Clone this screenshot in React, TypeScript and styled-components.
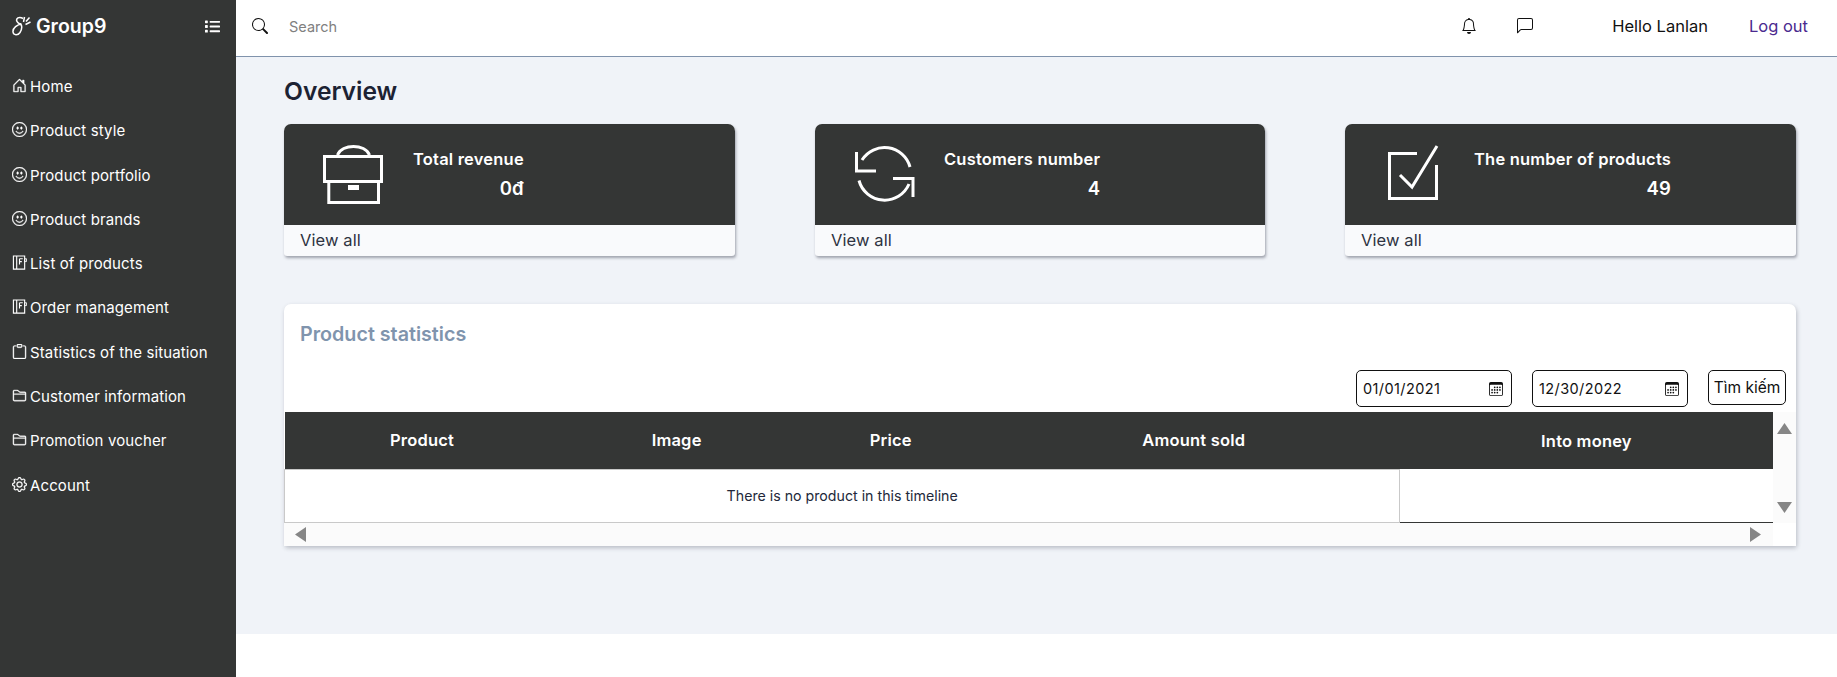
import React, { ReactNode } from 'react';
import styled, { createGlobalStyle } from 'styled-components';
import {
  BsBell,
  BsCalendar3,
  BsChatLeft,
  BsClipboard,
  BsEmojiSmile,
  BsFolder2,
  BsGear,
  BsHouseDoor,
  BsSearch,
} from 'react-icons/bs';
import { FaList } from 'react-icons/fa';

const dark = '#343635';
const font = '"Inter", "Noto Sans", sans-serif';

const GlobalStyle = createGlobalStyle`
  html, body {
    margin: 0;
    padding: 0;
    background: #fff;
    font-family: ${font};
  }
  * {
    box-sizing: border-box;
  }
`;

const Page = styled.div`
  display: flex;
  height: 677px;
  overflow: hidden;
`;

const Sidebar = styled.aside`
  width: 236px;
  flex: none;
  background: ${dark};
  color: #fff;
`;

const Brand = styled.div`
  display: flex;
  align-items: center;
  height: 56px;
  padding: 0 16px 4px 12px;
`;

const BrandName = styled.span`
  flex: 1;
  margin-left: 5px;
  font-size: 19.5px;
  font-weight: 600;
`;

const Nav = styled.nav`
  display: flex;
  flex-direction: column;
  gap: 14.3px;
  padding-top: 15.5px;
`;

const NavItem = styled.a`
  display: flex;
  align-items: center;
  gap: 3px;
  height: 30px;
  padding-left: 12px;
  font-size: 15px;
  letter-spacing: 0.12px;
  font-weight: 400;
  color: #fff;
  svg {
    flex: none;
    width: 15px;
    height: 15px;
    margin-top: -2px;
    stroke: currentColor;
    stroke-width: 0.35;
  }
`;

const Content = styled.div`
  flex: 1;
  min-width: 0;
  display: flex;
  flex-direction: column;
`;

const TopBar = styled.header`
  display: flex;
  align-items: center;
  height: 57px;
  flex: none;
  padding: 0 29px 4px 16px;
  background: #fff;
  border-bottom: 1px solid #8093ac;
  font-size: 16.5px;
  color: #111;
`;

const SearchField = styled.div`
  flex: 1;
  display: flex;
  align-items: center;
  gap: 21px;
  font-size: 14.5px;
  color: #808080;
  svg {
    width: 16px;
    height: 16px;
    color: #111;
  }
`;

const TopIcon = styled.span`
  display: flex;
  margin-left: 40px;
  svg {
    width: 16px;
    height: 16px;
  }
`;

const Greeting = styled.span`
  margin-left: 79px;
`;

const Logout = styled.a`
  margin-left: 41px;
  color: #4b2a8f;
`;

const Main = styled.main`
  height: 577px;
  flex: none;
  padding: 0 41px 0 48px;
  background: #f0f3f8;
`;

const Heading = styled.h1`
  margin: 0;
  height: 67px;
  padding-top: 17px;
  font-size: 24.6px;
  line-height: 34px;
  font-weight: 600;
  color: #1c2233;
`;

const Cards = styled.section`
  display: grid;
  grid-template-columns: 451px 450px 451px;
  gap: 80px;
`;

const Card = styled.article`
  height: 132px;
  border-radius: 7px 7px 3px 3px;
  overflow: hidden;
  background: #f9fafc;
  box-shadow: 1px 2px 3px rgba(60, 64, 80, 0.45);
`;

const CardBody = styled.div`
  display: flex;
  height: 101px;
  padding: 20px 0 0 38px;
  background: ${dark};
  color: #fff;
`;

const CardIcon = styled.svg`
  flex: none;
  width: 64px;
  height: 64px;
  margin-right: 27px;
  fill: none;
  stroke: #fff;
  stroke-width: 3;
`;

const CardText = styled.div`
  display: flex;
  flex-direction: column;
  align-items: flex-end;
  align-self: flex-start;
  font-size: 16.5px;
  letter-spacing: 0.2px;
  font-weight: 600;
`;

const CardTitle = styled.div`
  line-height: 28px;
  padding-top: 1px;
  height: 30px;
`;

const CardValue = styled.div`
  line-height: 28px;
  font-size: 18.5px;
`;

const CardLink = styled.a`
  display: block;
  padding-left: 16px;
  font-size: 16.5px;
  letter-spacing: 0.1px;
  line-height: 31px;
  color: #2e3342;
`;

const Panel = styled.section`
  display: flex;
  flex-direction: column;
  height: 242px;
  margin-top: 48px;
  background: #fff;
  border-radius: 7px 7px 3px 3px;
  box-shadow: 1px 2px 4px rgba(60, 64, 80, 0.3);
`;

const PanelTitle = styled.h2`
  margin: 0;
  height: 66px;
  padding: 16px 0 0 16px;
  font-size: 19.7px;
  line-height: 28px;
  font-weight: 600;
  color: #8094ad;
`;

const Filters = styled.div`
  display: flex;
  justify-content: flex-end;
  align-items: flex-start;
  gap: 20px;
  height: 42px;
  padding-right: 10px;
`;

const DateInput = styled.div`
  display: flex;
  align-items: center;
  justify-content: space-between;
  width: 156px;
  height: 37px;
  padding: 0 8px 0 6px;
  border: 1px solid #111;
  border-radius: 5px;
  font-size: 14.5px;
  letter-spacing: 0.4px;
  color: #111;
  svg {
    width: 14px;
    height: 14px;
  }
`;

const SearchButton = styled.button`
  width: 78px;
  height: 35px;
  padding: 0;
  border: 1px solid #111;
  border-radius: 5px;
  background: #fff;
  font-family: ${font};
  font-size: 15.5px;
  color: #111;
`;

const TableArea = styled.div`
  display: grid;
  grid-template-columns: 1fr 23px;
  grid-template-rows: 111px 23px;
  flex: 1;
`;

const Table = styled.table`
  width: 100%;
  border-collapse: collapse;
  table-layout: fixed;
  font-size: 16.5px;
  letter-spacing: 0.2px;
`;

const HeaderCell = styled.th`
  height: 57px;
  padding: 0;
  background: ${dark};
  color: #fff;
  font-weight: 600;
`;

const EmptyCell = styled.td`
  height: 52px;
  padding: 0;
  border: 1px solid #c9c9c9;
  text-align: center;
  font-size: 14.2px;
  letter-spacing: 0;
  color: #22283a;
`;

const BlankCell = styled.td`
  border-bottom: 1px solid ${dark};
`;

const Scroll = styled.div<{ $vertical?: boolean }>`
  display: flex;
  flex-direction: ${(p) => (p.$vertical ? 'column' : 'row')};
  justify-content: space-between;
  align-items: center;
  padding: ${(p) => (p.$vertical ? '11px 0 10px' : '0 12px 0 11px')};
  background: #fbfbfb;
  color: #868686;
  svg {
    fill: currentColor;
    display: block;
  }
`;

const Corner = styled.div`
  background: #fff;
`;

const columns = [
  { label: 'Product', width: 275 },
  { label: 'Image', width: 234 },
  { label: 'Price', width: 194 },
  { label: 'Amount sold', width: 412 },
  { label: 'Into money', width: 373 },
];

const Notebook = () => (
  <svg viewBox="0 0 16 16" fill="none">
    <path d="M1.500 1H13.500V15H1.500z" fill="none" strokeWidth="1.200" />
    <path d="M5 1V15M8 4H11.500M8 7H10.500M8 4V10" strokeWidth="1.200" />
    <path d="M13.500 4H15.500V7H13.500z" strokeWidth="0.900" />
  </svg>
);

const navItems: { label: string; icon: ReactNode }[] = [
  { label: 'Home', icon: <BsHouseDoor /> },
  { label: 'Product style', icon: <BsEmojiSmile /> },
  { label: 'Product portfolio', icon: <BsEmojiSmile /> },
  { label: 'Product brands', icon: <BsEmojiSmile /> },
  { label: 'List of products', icon: <Notebook /> },
  { label: 'Order management', icon: <Notebook /> },
  { label: 'Statistics of the situation', icon: <BsClipboard /> },
  { label: 'Customer information', icon: <BsFolder2 /> },
  { label: 'Promotion voucher', icon: <BsFolder2 /> },
  { label: 'Account', icon: <BsGear /> },
];

const Logo = () => (
  <svg width="19" height="20" viewBox="0 0 19 20" fill="none" stroke="#fff" strokeWidth="1.500">
    <path d="M11 2.500C7 0 3.500 2.500 5 5.500C6 7.500 8 8 9.500 8C5.500 8.500 0.500 12 1 16C1.500 19.500 6 19.500 8 16.500C9.500 14 10.500 11 9 8.500" />
    <path d="M12.500 1L11.500 6M14 5.500L17.500 1.500M13.500 8.500L18.500 6" />
  </svg>
);

const cards: { title: string; value: string; icon: ReactNode }[] = [
  {
    title: 'Total revenue',
    value: '0đ',
    icon: (
      <>
        <path d="M2.500 12.500H59.500V37.500H2.500z" />
        <path d="M6.800 37.500V58.500H56.500V37.500" />
        <path d="M15.500 11C20 -0.500 43 -0.500 47.500 11" />
        <path d="M26 41H37V46H26z" fill="#fff" stroke="none" />
      </>
    ),
  },
  {
    title: 'Customers number',
    value: '4',
    icon: (
      <>
        <path d="M3.500 8V27H23" />
        <path d="M9 16A26.500 26.500 0 0 1 57 23" />
        <path d="M6 36.500A26.500 26.500 0 0 0 56 40" />
        <path d="M60 53V34.500H40" />
      </>
    ),
  },
  {
    title: 'The number of products',
    value: '49',
    icon: (
      <>
        <path d="M34 9.500H6.500V54.500H53.500V21" />
        <path d="M17 31L29 43L54 2" />
      </>
    ),
  },
];

export default function App() {
  return (
    <Page>
      <GlobalStyle />
      <Sidebar>
        <Brand>
          <Logo />
          <BrandName>Group9</BrandName>
          <FaList size={15} />
        </Brand>
        <Nav>
          {navItems.map((item) => (
            <NavItem key={item.label}>
              {item.icon}
              {item.label}
            </NavItem>
          ))}
        </Nav>
      </Sidebar>
      <Content>
        <TopBar>
          <SearchField>
            <BsSearch />
            Search
          </SearchField>
          <TopIcon>
            <BsBell />
          </TopIcon>
          <TopIcon>
            <BsChatLeft />
          </TopIcon>
          <Greeting>Hello Lanlan</Greeting>
          <Logout>Log out</Logout>
        </TopBar>
        <Main>
          <Heading>Overview</Heading>
          <Cards>
            {cards.map((card) => (
              <Card key={card.title}>
                <CardBody>
                  <CardIcon viewBox="0 0 64 64">{card.icon}</CardIcon>
                  <CardText>
                    <CardTitle>{card.title}</CardTitle>
                    <CardValue>{card.value}</CardValue>
                  </CardText>
                </CardBody>
                <CardLink>View all</CardLink>
              </Card>
            ))}
          </Cards>
          <Panel>
            <PanelTitle>Product statistics</PanelTitle>
            <Filters>
              <DateInput>
                01/01/2021
                <BsCalendar3 />
              </DateInput>
              <DateInput>
                12/30/2022
                <BsCalendar3 />
              </DateInput>
              <SearchButton>Tìm kiếm</SearchButton>
            </Filters>
            <TableArea>
              <Table>
                <colgroup>
                  {columns.map((col) => (
                    <col key={col.label} width={col.width} />
                  ))}
                </colgroup>
                <thead>
                  <tr>
                    {columns.map((col) => (
                      <HeaderCell key={col.label}>{col.label}</HeaderCell>
                    ))}
                  </tr>
                </thead>
                <tbody>
                  <tr>
                    <EmptyCell colSpan={4}>There is no product in this timeline</EmptyCell>
                    <BlankCell />
                  </tr>
                </tbody>
              </Table>
              <Scroll $vertical>
                <svg width="15" height="11" viewBox="0 0 15 11"><path d="M7.500 0L15 11H0z" /></svg>
                <svg width="15" height="11" viewBox="0 0 15 11"><path d="M0 0H15L7.500 11z" /></svg>
              </Scroll>
              <Scroll>
                <svg width="11" height="15" viewBox="0 0 11 15"><path d="M11 0V15L0 7.500z" /></svg>
                <svg width="11" height="15" viewBox="0 0 11 15"><path d="M0 0V15L11 7.500z" /></svg>
              </Scroll>
              <Corner />
            </TableArea>
          </Panel>
        </Main>
      </Content>
    </Page>
  );
}
